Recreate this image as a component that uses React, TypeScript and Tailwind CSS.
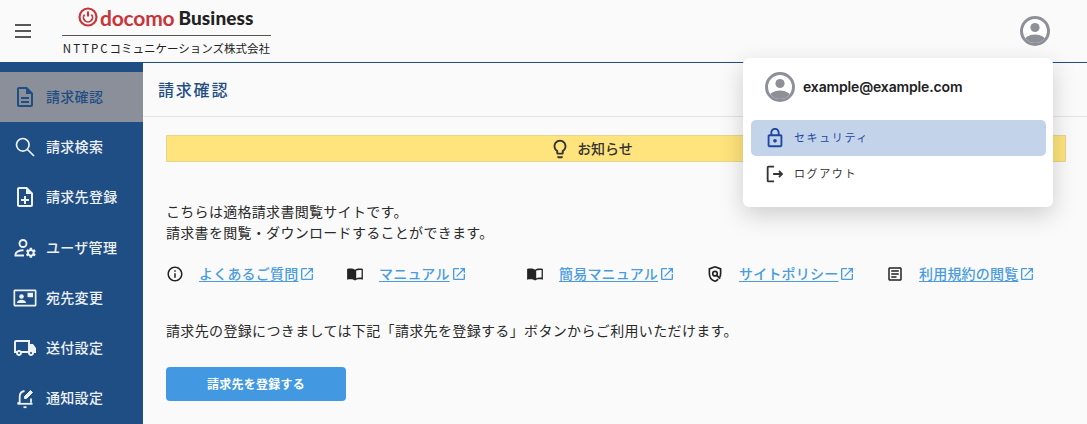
import React from "react";

const font = { fontFamily: '"Noto Sans CJK JP", sans-serif' };

function Mi({ d, className }: { d: string; className?: string }) {
  return (
    <svg viewBox="0 0 24 24" fill="currentColor" className={className}>
      <path d={d} fillRule="evenodd" />
    </svg>
  );
}

const icons = {
  doc: "M8 16h8v2H8zm0-4h8v2H8zm6-10H6c-1.1 0-2 .9-2 2v16c0 1.1.89 2 1.99 2H18c1.1 0 2-.9 2-2V8l-6-6zm4 18H6V4h7v5h5v11z",
  noteAdd:
    "M13 11h-2v3H8v2h3v3h2v-3h3v-2h-3zm1-9H6c-1.1 0-2 .9-2 2v16c0 1.1.89 2 1.99 2H18c1.1 0 2-.9 2-2V8l-6-6zm4 18H6V4h7v5h5v11z",
  lock: "M18 8h-1V6c0-2.76-2.24-5-5-5S7 3.24 7 6v2H6c-1.1 0-2 .9-2 2v10c0 1.1.9 2 2 2h12c1.1 0 2-.9 2-2V10c0-1.1-.9-2-2-2zM9 6c0-1.66 1.34-3 3-3s3 1.34 3 3v2H9V6zm9 14H6V10h12v10zm-6-3c1.1 0 2-.9 2-2s-.9-2-2-2-2 .9-2 2 .9 2 2 2z",
  logout:
    "M17 8l-1.41 1.41L17.17 11H10v2h7.17l-1.58 1.58L17 16l4-4-4-4zM5 5h6V3H5c-1.1 0-2 .9-2 2v14c0 1.1.9 2 2 2h6v-2H5V5z",
  info: "M11 7h2v2h-2zm0 4h2v6h-2zm1-9C6.48 2 2 6.48 2 12s4.48 10 10 10 10-4.48 10-10S17.52 2 12 2zm0 18c-4.41 0-8-3.59-8-8s3.59-8 8-8 8 3.59 8 8-3.59 8-8 8z",
  open: "M19 19H5V5h7V3H5c-1.11 0-2 .9-2 2v14c0 1.1.89 2 2 2h14c1.1 0 2-.9 2-2v-7h-2v7zM14 3v2h3.59l-9.83 9.83 1.41 1.41L19 6.41V10h2V3h-7z",
  article:
    "M19 5v14H5V5h14m0-2H5c-1.1 0-2 .9-2 2v14c0 1.1.9 2 2 2h14c1.1 0 2-.9 2-2V5c0-1.1-.9-2-2-2zM14 17H7v-2h7v2zm3-4H7v-2h10v2zm0-4H7V7h10v2z",
  bulb: "M9 21c0 .55.45 1 1 1h4c.55 0 1-.45 1-1v-1H9v1zm3-19C8.14 2 5 5.14 5 9c0 2.38 1.19 4.47 3 5.74V17c0 .55.45 1 1 1h6c.55 0 1-.45 1-1v-2.26c1.81-1.27 3-3.36 3-5.74 0-3.86-3.14-7-7-7zm2.85 11.1-.85.6V16h-4v-2.3l-.85-.6C7.8 12.16 7 10.63 7 9c0-2.76 2.24-5 5-5s5 2.24 5 5c0 1.63-.8 3.16-2.15 4.1z",
  book: "M12 6.2C10 4.7 5.5 4.2 1.5 5.2v14.3c4-1 8.5-.6 10.5 1 2-1.6 6.5-2 10.5-1V5.2c-4-1-8.5-.5-10.5 1zm1.6 1.2v10.2c1.8-.8 4.4-1.1 7.2-.8V6.8c-2.8-.3-5.4 0-7.2.6z",
};

function UserIcon({ className }: { className?: string }) {
  return (
    <svg viewBox="0 0 30 30" className={className}>
      <clipPath id="u">
        <circle cx="15" cy="15" r="12" />
      </clipPath>
      <circle cx="15" cy="15" r="13.5" fill="#fff" stroke="#8e9098" strokeWidth="3" />
      <circle cx="15" cy="11.5" r="4.6" fill="#8e9098" />
      <ellipse cx="15" cy="25" rx="11" ry="6.5" fill="#8e9098" clipPath="url(#u)" />
    </svg>
  );
}

function SearchIcon({ className }: { className?: string }) {
  return (
    <svg viewBox="0 0 24 24" fill="none" stroke="currentColor" strokeWidth="1.7" className={className}>
      <circle cx="9.8" cy="9.8" r="6.3" />
      <path d="M14.5 14.5 21 21" />
    </svg>
  );
}

function UsersCog({ className }: { className?: string }) {
  return (
    <svg viewBox="0 0 24 24" className={className}>
      <g fill="none" stroke="currentColor" strokeWidth="1.9">
        <circle cx="10" cy="7.5" r="3.5" />
        <path d="M11 19.5H2.5v-1.2c0-2.4 3.8-4 8-4" />
      </g>
      <path
        transform="translate(11.6 10.6) scale(.52)"
        fill="currentColor"
        d="M19.14 12.94c.04-.3.06-.61.06-.94 0-.32-.02-.64-.07-.94l2.03-1.58c.18-.14.23-.41.12-.61l-1.92-3.32c-.12-.22-.37-.29-.59-.22l-2.39.96c-.5-.38-1.03-.7-1.62-.94l-.36-2.54c-.04-.24-.24-.41-.48-.41h-3.84c-.24 0-.43.17-.47.41l-.36 2.54c-.59.24-1.13.57-1.62.94l-2.39-.96c-.22-.08-.47 0-.59.22L2.74 8.87c-.12.21-.08.47.12.61l2.03 1.58c-.05.3-.09.63-.09.94s.02.64.07.94l-2.03 1.58c-.18.14-.23.41-.12.61l1.92 3.32c.12.22.37.29.59.22l2.39-.96c.5.38 1.03.7 1.62.94l.36 2.54c.05.24.24.41.48.41h3.84c.24 0 .44-.17.47-.41l.36-2.54c.59-.24 1.13-.56 1.62-.94l2.39.96c.22.08.47 0 .59-.22l1.92-3.32c.12-.22.07-.47-.12-.61l-2.01-1.58zM12 15.6c-1.98 0-3.6-1.62-3.6-3.6s1.62-3.6 3.6-3.6 3.6 1.62 3.6 3.6-1.62 3.6-3.6 3.6z"
      />
    </svg>
  );
}

function ContactIcon({ className }: { className?: string }) {
  return (
    <svg viewBox="0 0 24 24" fill="currentColor" className={className}>
      <path d="M2 3.5h20c.8 0 1.5.7 1.5 1.5v14c0 .8-.7 1.5-1.5 1.5H2c-.8 0-1.5-.7-1.5-1.5V5c0-.8.7-1.5 1.5-1.5zm.2 1.7v13.6h19.6V5.2H2.2z" fillRule="evenodd" />
      <circle cx="8.5" cy="10.5" r="2.3" />
      <path d="M4 17c0-2.2 2.6-3.2 4.5-3.2S13 14.8 13 17H4z" />
      <path d="M14.5 6.8H20v4.4h-5.5z" />
    </svg>
  );
}

function TruckIcon({ className }: { className?: string }) {
  return (
    <svg viewBox="0 0 24 24" fill="currentColor" className={className}>
      <path
        fillRule="evenodd"
        d="M20 8h-3V4H3c-1.1 0-2 .9-2 2v11h2c0 1.66 1.34 3 3 3s3-1.34 3-3h6c0 1.66 1.34 3 3 3s3-1.34 3-3h2v-5l-3-4zM6 18c-.55 0-1-.45-1-1s.45-1 1-1 1 .45 1 1-.45 1-1 1zm2.22-3c-.55-.61-1.33-1-2.22-1s-1.67.39-2.22 1H3V6h12v9H8.22zM18 18c-.55 0-1-.45-1-1s.45-1 1-1 1 .45 1 1-.45 1-1 1z"
      />
    </svg>
  );
}

function BellEdit({ className }: { className?: string }) {
  return (
    <svg viewBox="0 0 24 24" fill="none" stroke="currentColor" strokeWidth="1.8" className={className}>
      <path d="M11.5 5c-3 .4-4.8 2.8-4.8 5.7v6.1H4.5M18 16.8v-4.3" />
      <path d="M4.5 17.8h15" />
      <path d="M10.5 21.2h3" />
      <path d="M11.5 12.5v-2l6-6 2 2-6 6h-2z" fill="currentColor" strokeWidth="1" />
    </svg>
  );
}

function PolicyIcon({ className }: { className?: string }) {
  return (
    <svg viewBox="0 0 24 24" fill="none" stroke="currentColor" strokeWidth="2.2" className={className}>
      <path d="M12 2.2 4.5 5.2v6c0 4.8 3.2 9 7.5 10.4 1.7-.6 3-1.5 4.2-2.8" />
      <path d="M12 2.2l7.5 3v6c0 1.9-.5 3.7-1.3 5.2" />
      <circle cx="12" cy="11.5" r="3" />
      <path d="M14.3 13.8l4.500 4.500" />
    </svg>
  );
}

const navItems: { label: string; icon: React.ReactNode; active?: boolean }[] = [
  { label: "請求確認", icon: <Mi d={icons.doc} className="w-6 h-6" />, active: true },
  { label: "請求検索", icon: <SearchIcon className="w-6 h-6" /> },
  { label: "請求先登録", icon: <Mi d={icons.noteAdd} className="w-6 h-6" /> },
  { label: "ユーザ管理", icon: <UsersCog className="w-6 h-6" /> },
  { label: "宛先変更", icon: <ContactIcon className="w-6 h-6" /> },
  { label: "送付設定", icon: <TruckIcon className="w-6 h-6" /> },
  { label: "通知設定", icon: <BellEdit className="w-6 h-6" /> },
];

const links: { label: string; icon: React.ReactNode }[] = [
  { label: "よくあるご質問", icon: <Mi d={icons.info} className="w-[18px] h-[18px]" /> },
  { label: "マニュアル", icon: <Mi d={icons.book} className="w-[18px] h-[18px]" /> },
  { label: "簡易マニュアル", icon: <Mi d={icons.book} className="w-[18px] h-[18px]" /> },
  { label: "サイトポリシー", icon: <PolicyIcon className="w-[18px] h-[18px]" /> },
  { label: "利用規約の閲覧", icon: <Mi d={icons.article} className="w-[18px] h-[18px]" /> },
];

export default function App() {
  return (
    <div className="relative w-[1087px] h-[424px] overflow-hidden bg-[#fafafa] text-[#222]" style={font}>
      <header className="flex items-center justify-between h-[63px] border-b border-[#1f4e85] pl-[12px] pr-[37px]">
        <div className="flex items-center">
          <svg viewBox="0 0 22 22" fill="none" stroke="#222" strokeWidth="1.7" className="w-[22px] h-[22px]">
            <path d="M3 5h16M3 11h16M3 17h16" />
          </svg>
          <div className="ml-[28px] w-[209px] flex flex-col items-stretch">
            <div className="flex items-center h-[34px] border-b border-[#555] pl-[16px] pb-[2px]">
              <svg viewBox="0 0 20 20" className="w-[20px] h-[20px] text-[#c8363c]" fill="none" stroke="currentColor" strokeWidth="2.2">
                <circle cx="10" cy="10" r="8.5" />
                <path d="M10 4.5v5" />
                <path d="M6.6 7.5a4.5 4.5 0 1 0 6.8 0" strokeWidth="1.8" />
              </svg>
              <span className="ml-[2px] text-[21px] leading-none font-bold text-[#c8363c] tracking-[-0.2px]" style={{ fontFamily: '"Lato", sans-serif' }}>
                docomo
              </span>
              <span className="ml-[4px] text-[19px] leading-none font-black text-[#222] tracking-[0.1px]" style={{ fontFamily: '"Lato", sans-serif' }}>
                Business
              </span>
            </div>
            <div className="text-[11.5px] leading-[25px] text-center whitespace-nowrap">
              <span className="tracking-[2px]">NTTPC</span>コミュニケーションズ株式会社
            </div>
          </div>
        </div>
        <UserIcon className="w-[30px] h-[30px]" />
      </header>

      <div className="flex h-[361px]">
        <aside className="w-[143px] shrink-0 bg-[#1f4e85] pt-[9px] text-[#eef1f5]">
          {navItems.map((item) => (
            <div
              key={item.label}
              className={`flex items-center h-[50.2px] pl-[13px] gap-[9px] text-[14px] font-medium tracking-[0.3px] ${
                item.active ? "bg-[#8b8f99] text-[#1f4e85]" : ""
              }`}
            >
              <span className="w-6 h-6 shrink-0">{item.icon}</span>
              <span className="whitespace-nowrap -mt-[1px]">{item.label}</span>
            </div>
          ))}
        </aside>

        <main className="flex-1">
          <div className="h-[54px] border-b border-[#e4e4e4] flex items-center pl-[15px] pb-[2px]">
            <h1 className="text-[16px] font-medium text-[#1f4e85] tracking-[1.8px]">請求確認</h1>
          </div>
          <div className="pl-[23px] pr-[21px]">
            <div className="mt-[18px] h-[27px] bg-[#ffe37c] border border-[#e6d58f] flex items-center justify-center gap-[6px] pr-[50px] text-[14px] font-medium text-[#333]">
              <Mi d={icons.bulb} className="w-[22px] h-[22px]" />
              <span>お知らせ</span>
            </div>
            <p className="mt-[39px] text-[14px] leading-[21px] tracking-[0.3px] text-[#2a2a2a]">
              こちらは適格請求書閲覧サイトです。
              <br />
              請求書を閲覧・ダウンロードすることができます。
            </p>
            <div className="mt-[20px] grid grid-cols-[repeat(5,180px)] items-center">
              {links.map((link) => (
                <div key={link.label} className="flex items-center gap-[15px]">
                  {link.icon}
                  <span className="flex items-center text-[#4a9ce0]">
                    <a className="text-[14px] font-medium underline underline-offset-2 tracking-[0.2px] whitespace-nowrap">{link.label}</a>
                    <Mi d={icons.open} className="w-4 h-4 ml-[1px]" />
                  </span>
                </div>
              ))}
            </div>
            <p className="mt-[36px] text-[14px] leading-[21px] tracking-[0.35px] text-[#2a2a2a]">
              請求先の登録につきましては下記「請求先を登録する」ボタンからご利用いただけます。
            </p>
            <button className="mt-[26px] w-[180px] h-[34px] rounded-[4px] bg-[#4299e1] text-white text-[12px] font-bold tracking-[0.25px]">
              請求先を登録する
            </button>
          </div>
        </main>
      </div>

      <div className="absolute left-[743px] top-[58px] w-[310px] h-[149px] bg-white rounded-[6px] shadow-[0_8px_24px_rgba(0,0,0,0.18)]">
        <div className="flex items-center pl-[22px] h-[57px] gap-[8px] pt-[1px]">
          <UserIcon className="w-[30px] h-[30px]" />
          <span className="text-[14px] font-semibold text-[#222] -mt-[2px] tracking-[-0.15px]" style={{ fontFamily: '"Inter", sans-serif' }}>
            example@example.com
          </span>
        </div>
        <div className="mt-[5px] ml-[8px] mr-[7px] h-[36px] rounded-[5px] bg-[#c3d4ea] flex items-center pl-[13px] gap-[8px] text-[#1e46a0]">
          <Mi d={icons.lock} className="w-[22px] h-[22px]" />
          <span className="text-[11px] tracking-[1.6px] -mt-[2px]">セキュリティ</span>
        </div>
        <div className="ml-[8px] mr-[7px] h-[36px] flex items-center pl-[13px] gap-[8px] text-[#333]">
          <Mi d={icons.logout} className="w-[22px] h-[22px]" />
          <span className="text-[11px] tracking-[1.6px] -mt-[2px]">ログアウト</span>
        </div>
      </div>
    </div>
  );
}
